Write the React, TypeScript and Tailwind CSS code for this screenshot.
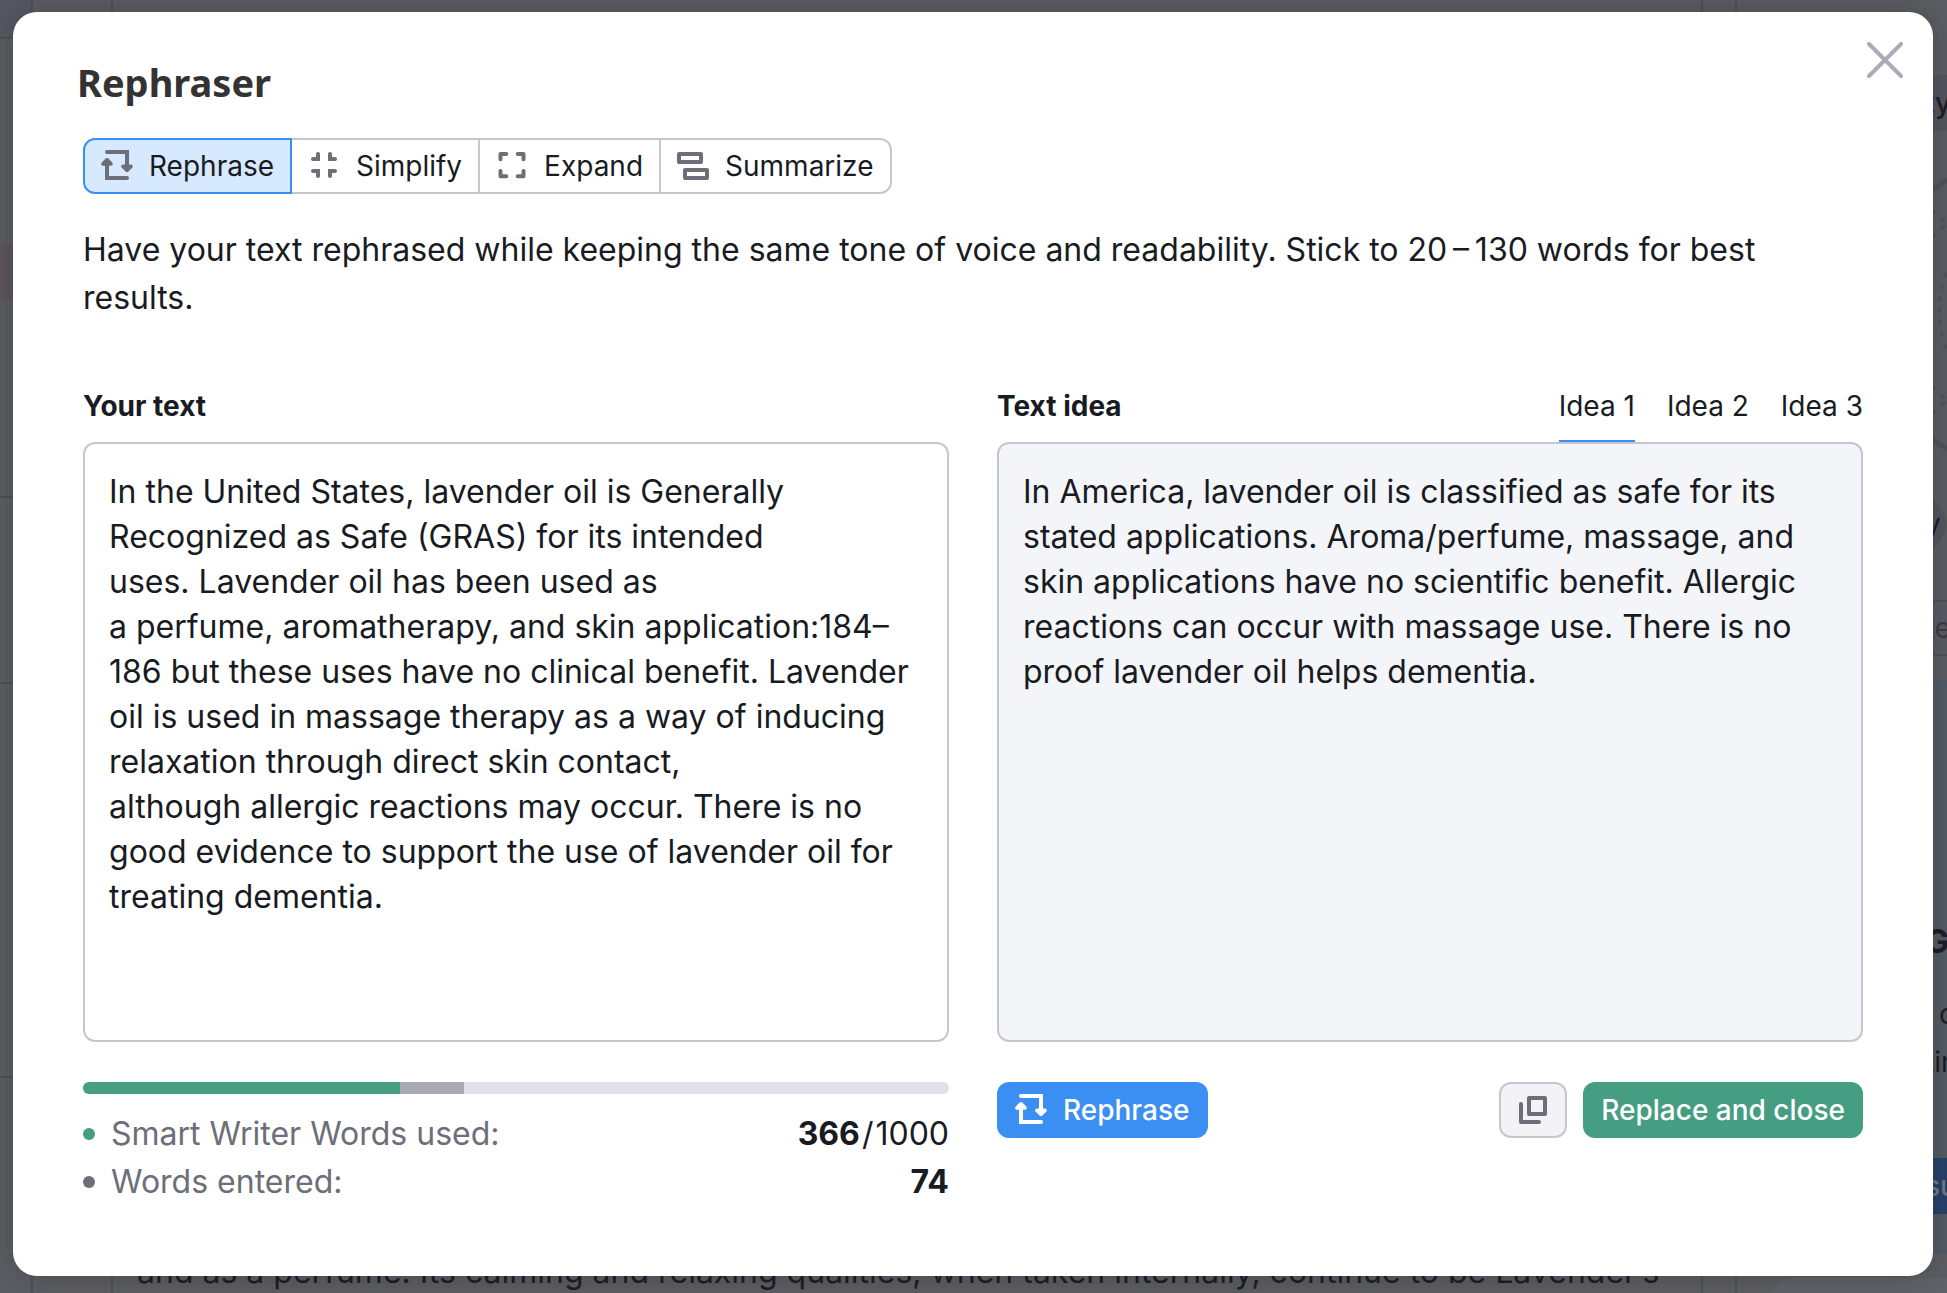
import { useState } from 'react';
import type { ReactNode } from 'react';
import clsx from 'clsx';

const SOURCE_TEXT =
    'In the United States, lavender oil is Generally Recognized as Safe (GRAS) for its intended ' +
    'uses.\u00a0Lavender oil has been used as a\u00a0perfume,\u00a0aromatherapy, and skin application:184–186 ' +
    'but these uses have no clinical benefit. Lavender oil is used in massage therapy as a way of inducing ' +
    'relaxation through direct skin contact, although\u00a0allergic reactions may occur. There is no good ' +
    'evidence to support the use of lavender oil for treating dementia.';

const IDEA_TEXT =
    'In America, lavender oil is classified as safe for its stated applications. Aroma/perfume, massage, ' +
    'and skin applications have no scientific benefit. Allergic reactions can occur with massage use. ' +
    'There is no proof lavender oil helps dementia.';

const WORDS_USED = 366;
const WORDS_LIMIT = 1000;
const WORDS_ENTERED = 74;

function Icon({ children }: { children: ReactNode }) {
    return (
        <svg className="w-8 h-8 shrink-0" viewBox="0 0 32 32" fill="none" stroke="currentColor" strokeWidth="4" aria-hidden="true">
            {children}
        </svg>
    );
}

function RephraseIcon() {
    return (
        <Icon>
            <path d="M6 2H26V18M26 28H6V12" strokeLinecap="round" />
            <path d="M22.2 16.4H29.8L26 20.2ZM2.2 13.8H9.8L6 10Z" fill="currentColor" strokeLinejoin="round" />
        </Icon>
    );
}

function SimplifyIcon() {
    return (
        <Icon>
            <path d="M10 4V9H5M22 4V9H27M5 21H10V26M27 21H22V26" strokeLinecap="round" />
        </Icon>
    );
}

function ExpandIcon() {
    return (
        <Icon>
            <path d="M10.3 4H4.5V9.3M21.7 4H27.5V9.3M4.5 21V26.3H10.3M27.5 21V26.3H21.7" strokeLinecap="round" strokeLinejoin="round" />
        </Icon>
    );
}

function SummarizeIcon() {
    return (
        <Icon>
            <path d="M2 4H24V12H2ZM8 20H30V28H8Z" strokeLinejoin="round" />
        </Icon>
    );
}

function CopyIcon() {
    return (
        <Icon>
            <path d="M12 4H28V20H12ZM4 10V28H22" strokeLinecap="round" strokeLinejoin="round" />
        </Icon>
    );
}

const modes = [
    { name: 'Rephrase', icon: RephraseIcon },
    { name: 'Simplify', icon: SimplifyIcon },
    { name: 'Expand', icon: ExpandIcon },
    { name: 'Summarize', icon: SummarizeIcon },
];

const ideas = ['Idea 1', 'Idea 2', 'Idea 3'];

// Dimmed editor page that stays visible around the dialog
function Backdrop() {
    return (
        <div className="absolute inset-0 flex overflow-hidden bg-[#5d5e63] text-[#1c1d24]" aria-hidden="true">
            <div className="flex w-[33px] shrink-0 flex-col border-r-2 border-[#505157]">
                <div className="h-[39px] border-b-2 border-[#505157] bg-[#575863]" />
                <div className="h-[204px]" />
                <div className="h-[58px] bg-[#5d575b]" />
                <div className="h-[197px] border-b-2 border-[#505157]" />
                <div className="h-[186px] border-b-2 border-[#505157]" />
                <div className="h-[394px] border-b-2 border-[#505157]" />
            </div>
            <div className="w-20 shrink-0 border-r-2 border-[#505157]" />
            <div className="flex flex-1 items-end overflow-hidden border-r-2 border-[#505157] pb-px pl-6 text-[32px] leading-[40px] whitespace-nowrap">
                and as a perfume. Its calming and relaxing qualities, when taken internally, continue to be Lavender’s
            </div>
            <div className="w-[34px] shrink-0 border-r-2 border-[#505157]" />
            <div className="flex w-[210px] shrink-0 flex-col overflow-hidden pt-[75px] text-[28px] leading-[56px] whitespace-nowrap">
                <div className="h-14 bg-[#54555f] pl-[188px] font-medium">ty</div>
                <div className="flex h-[365px] justify-end">
                    <svg className="h-full w-4" viewBox="0 0 16 365" fill="none" stroke="#525358">
                        <path d="M0 60L16 49M0 308L16 318" strokeWidth="5" />
                        <path d="M1 79L16 94M1 106L14 94M15 142Q1 182 16 220M1 256L16 270M1 282L15 270" strokeWidth="3" strokeDasharray="5 7" />
                    </svg>
                </div>
                <div className="h-14 w-[209px] rounded-full bg-[#54555f] pl-[188px]">y</div>
                <div className="mt-12 h-14 border-y-2 border-[#505157] bg-[#5a5b65] pl-[180px] leading-[52px] text-[#3b3c46]">Re</div>
                <div className="mt-6 flex h-[574px] shrink-0 flex-col border-y-2 border-[#4a5c75] bg-[#565c64] pt-[232px]">
                    <div className="pl-[188px] text-[32px] leading-[56px] font-bold">G</div>
                    <div className="pl-[202px] pt-4 leading-[56px]">c</div>
                    <div className="pl-[188px] leading-[40px]">tin</div>
                    <div className="mt-[76px] h-14 bg-[#26426b] pl-[188px] font-medium text-[#737985]">su</div>
                </div>
                <div className="mt-6 ml-8 h-10 shrink-0 rounded-tl-3xl bg-[#626368]" />
            </div>
        </div>
    );
}

export default function App() {
    const [mode, setMode] = useState('Rephrase');
    const [idea, setIdea] = useState('Idea 1');
    const [text, setText] = useState(SOURCE_TEXT);

    return (
        <div className="relative min-h-screen overflow-hidden pt-3 pr-[14px] pb-[17px] pl-[13px] font-['Inter',sans-serif] text-[#191b23]">
            <Backdrop />

            <div role="dialog" aria-labelledby="title" className="relative rounded-3xl bg-white px-[70px] pt-[46px] pb-[70px] shadow-[0_0_32px_rgba(25,27,35,0.3)]">
                <button aria-label="Close" className="absolute top-[30px] right-[30px] text-[#a9abb6]">
                    <svg className="w-9 h-9" viewBox="0 0 36 36" fill="none" stroke="currentColor" strokeWidth="4" strokeLinecap="round">
                        <path d="M2 2L34 34M34 2L2 34" />
                    </svg>
                </button>

                <h2 id="title" className="-ml-[6px] font-['Noto_Sans',sans-serif] text-[38px] leading-[48px] font-bold text-[#333333]">
                    Rephraser
                </h2>

                <div className="mt-8 flex text-[28px] leading-[52px]">
                    {modes.map((item) => (
                        <button
                            key={item.name}
                            onClick={() => setMode(item.name)}
                            className={clsx(
                                '-ml-[2px] flex items-center gap-4 border-2 px-4 first:ml-0 first:rounded-l-xl last:rounded-r-xl',
                                mode === item.name ? 'relative border-[#3b8ff3] bg-[#d7e9ff]' : 'border-[#c4c7cf]'
                            )}
                        >
                            <span className="text-[#6c6e79]">
                                <item.icon />
                            </span>
                            {item.name}
                        </button>
                    ))}
                </div>

                <p className="mt-8 text-[32px] leading-[48px]">
                    Have your text rephrased while keeping the same tone of voice and readability. Stick to 20{'\u2009'}–{'\u2009'}130 words for best results.
                </p>

                <div className="mt-12 grid grid-cols-2 gap-12">
                    <section>
                        <label htmlFor="source" className="block text-[28px] leading-[72px] font-bold">
                            Your text
                        </label>
                        <textarea
                            id="source"
                            value={text}
                            onChange={(e) => setText(e.target.value)}
                            spellCheck={false}
                            className="block h-[600px] w-full resize-none rounded-xl border-2 border-[#c4c7cf] px-6 py-[25px] text-[32px] leading-[45px]"
                        />
                        <div className="mt-10 flex h-3 overflow-hidden rounded-full bg-[#e0e1e9]">
                            <div className="bg-[#459e81]" style={{ width: `${(WORDS_USED / WORDS_LIMIT) * 100}%` }} />
                            <div className="bg-[#a9abb6]" style={{ width: `${(WORDS_ENTERED / WORDS_LIMIT) * 100}%` }} />
                        </div>
                        <div className="mt-4 text-[32px] leading-[48px]">
                            <div className="flex items-center gap-4">
                                <span className="w-3 h-3 rounded-full bg-[#459e81]" />
                                <span className="flex-1 text-[#6c6e79]">Smart Writer Words used:</span>
                                <span>
                                    <b>{WORDS_USED}</b>
                                    <span className="mx-[2px]">/</span>
                                    {WORDS_LIMIT}
                                </span>
                            </div>
                            <div className="flex items-center gap-4">
                                <span className="w-3 h-3 rounded-full bg-[#6c6e79]" />
                                <span className="flex-1 text-[#6c6e79]">Words entered:</span>
                                <b>{WORDS_ENTERED}</b>
                            </div>
                        </div>
                    </section>

                    <section>
                        <div className="flex justify-between text-[28px]">
                            <label htmlFor="idea" className="leading-[72px] font-bold">
                                Text idea
                            </label>
                            <div className="flex gap-8">
                                {ideas.map((name) => (
                                    <button
                                        key={name}
                                        onClick={() => setIdea(name)}
                                        className={clsx('border-y-2 border-t-transparent leading-[68px]', idea === name ? 'border-b-[#3b8ff3]' : 'border-b-transparent')}
                                    >
                                        {name}
                                    </button>
                                ))}
                            </div>
                        </div>
                        <textarea
                            id="idea"
                            readOnly
                            value={IDEA_TEXT}
                            spellCheck={false}
                            className="block h-[600px] w-full resize-none rounded-xl border-2 border-[#c4c7cf] bg-[#f4f5f9] px-6 py-[25px] text-[32px] leading-[45px]"
                        />
                        <div className="mt-10 flex gap-4 text-[28px] leading-[56px] font-medium">
                            <button className="mr-auto flex items-center gap-4 rounded-xl bg-[#3b8ff3] px-[18px] text-white">
                                <RephraseIcon />
                                Rephrase
                            </button>
                            <button aria-label="Copy" className="flex items-center rounded-xl border-2 border-[#c4c7cf] bg-[#f3f3f7] px-4 text-[#6c6e79]">
                                <CopyIcon />
                            </button>
                            <button className="rounded-xl bg-[#459e81] px-[18px] text-white">Replace and close</button>
                        </div>
                    </section>
                </div>
            </div>
        </div>
    );
}
